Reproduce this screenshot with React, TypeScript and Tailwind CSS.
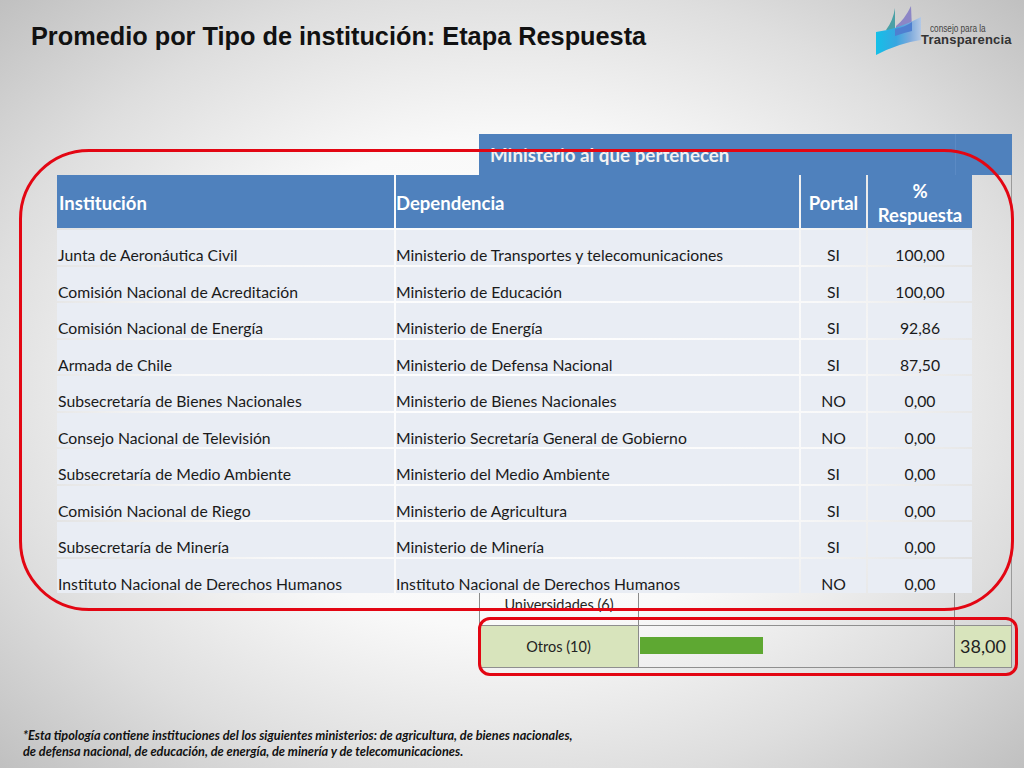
const rows: [string, string, string, string][] = [
  ["Junta de Aeronáutica Civil", "Ministerio de Transportes y telecomunicaciones", "SI", "100,00"],
  ["Comisión Nacional de Acreditación", "Ministerio de Educación", "SI", "100,00"],
  ["Comisión Nacional de Energía", "Ministerio de Energía", "SI", "92,86"],
  ["Armada de Chile", "Ministerio de Defensa Nacional", "SI", "87,50"],
  ["Subsecretaría de Bienes Nacionales", "Ministerio de Bienes Nacionales", "NO", "0,00"],
  ["Consejo Nacional de Televisión", "Ministerio Secretaría General de Gobierno", "NO", "0,00"],
  ["Subsecretaría de Medio Ambiente", "Ministerio del Medio Ambiente", "SI", "0,00"],
  ["Comisión Nacional de Riego", "Ministerio de Agricultura", "SI", "0,00"],
  ["Subsecretaría de Minería", "Ministerio de Minería", "SI", "0,00"],
  ["Instituto Nacional de Derechos Humanos", "Instituto Nacional de Derechos Humanos", "NO", "0,00"],
];

function Logo() {
  return (
    <div className="relative w-[140px] h-[54px]">
      <svg width="50" height="54" viewBox="0 0 50 54" className="absolute left-0 top-0">
        <defs>
          <linearGradient id="cy" x1="0" y1="0" x2="1" y2="0">
            <stop offset="0" stopColor="#14c0e8" />
            <stop offset="0.45" stopColor="#38a6e0" />
            <stop offset="0.75" stopColor="#7ba9dc" />
            <stop offset="1" stopColor="#b4c9e6" />
          </linearGradient>
        </defs>
        <path d="M11 29 Q18 20 20 7 L20 32 Z" fill="#4aa0a6" />
        <path d="M21 25 Q30 18 36 5 L37 28 L21 33 Z" fill="#8c86c6" />
        <path d="M1 31 Q24 28 46 16 L46 39 Q24 42 1 54 Z" fill="url(#cy)" />
        <path d="M20 28 Q30 26 37 21 L37 30 Q28 32 20 35 Z" fill="#4f7fd0" />
      </svg>
      <div className="absolute left-[55px] top-[23px] text-[10px] leading-[10px] text-[#444] font-['Liberation_Sans',sans-serif] scale-x-[0.82] origin-left whitespace-nowrap">consejo para la</div>
      <div className="absolute left-[46px] top-[31px] text-[13px] leading-[15px] font-bold text-[#333] font-['Liberation_Sans',sans-serif] whitespace-nowrap tracking-[0.2px]">Transparencia</div>
    </div>
  );
}

export default function App() {
  return (
    <div className="relative w-[1024px] h-[768px] overflow-hidden flex flex-col font-['Lato',sans-serif] text-[#111] bg-[radial-gradient(ellipse_at_50%_50%,#ffffff_0%,#f9f9f9_45%,#dedede_74%,#c0c0c0_100%)]">
      <header className="h-[134px] flex items-start justify-between pl-[31px] pr-[9px]">
        <h1 className="mt-[20px] text-[25.3px] leading-[32px] font-bold text-[#111] font-['Liberation_Sans',sans-serif] whitespace-nowrap">Promedio por Tipo de institución: Etapa Respuesta</h1>
        <div className="mt-[1px]"><Logo /></div>
      </header>

      <section className="ml-[479px] w-[533px] flex flex-col">
        <div className="h-[41px] bg-[#4f81bd] flex">
          <div className="w-[476px] pl-[11px] pt-[8px] text-[18.8px] leading-[26px] font-bold text-[#f2f2f2] whitespace-nowrap">Ministerio al que pertenecen</div>
          <div className="w-px bg-[#5b8ac4]" />
        </div>
        <div className="h-[409px] border-r border-[#9a9a9a]" />
        <div className="h-[41px] grid grid-cols-[160px_316px_1fr] border-r border-[#9a9a9a]">
          <div className="border-l border-r border-[#8a8a8a] text-center text-[14.5px] leading-[20px] text-[#222] pt-[11px] whitespace-nowrap">Universidades (6)</div>
          <div className="border-r border-[#8a8a8a]" />
          <div />
        </div>
        <div className="h-[43px] grid grid-cols-[160px_316px_1fr] border-y border-[#8f8f8f] border-r">
          <div className="bg-[#d8e4bc] border-r border-[#8a8a8a] flex items-center justify-center text-[14.5px] text-[#222]">Otros (10)</div>
          <div className="border-r border-[#8a8a8a] flex items-center pl-[1px] pb-[3px]">
            <div className="w-[123px] h-[17px] bg-[#5ea832]" />
          </div>
          <div className="bg-[#d8e4bc] flex items-center justify-center text-[18px] text-[#222]">38,00</div>
        </div>
      </section>

      <footer className="mt-[59px] pl-[23px] text-[12.7px] leading-[16px] font-bold italic text-[#111] whitespace-nowrap">
        <p>*Esta tipología contiene instituciones del los siguientes ministerios: de agricultura, de bienes nacionales,</p>
        <p>de defensa nacional, de educación, de energía, de minería y de telecomunicaciones.</p>
      </footer>

      <div className="absolute left-[57px] top-[175px] w-[915px] grid grid-cols-[337px_403px_65px_104px] gap-[2px] text-[15.75px] leading-[18px] text-[#1a1a1a]">
        <div className="h-[53px] bg-[#4f81bd] text-white font-bold text-[18.5px] flex items-center pl-[2px] pt-[3px]">Institución</div>
        <div className="h-[53px] bg-[#4f81bd] text-white font-bold text-[18.5px] flex items-center pl-0 pt-[3px]">Dependencia</div>
        <div className="h-[53px] bg-[#4f81bd] text-white font-bold text-[18.5px] flex items-center justify-center pt-[3px]">Portal</div>
        <div className="h-[53px] bg-[#4f81bd] text-white font-bold text-[18.5px] leading-[24px] flex items-center justify-center text-center pt-[3px]">%<br />Respuesta</div>
        {rows.map((r) => (
          <div key={r[0]} className="contents">
            <div className="h-[34.5px] bg-[#e9edf4] flex items-end pl-[1px] pb-[0.5px] whitespace-nowrap">{r[0]}</div>
            <div className="h-[34.5px] bg-[#e9edf4] flex items-end pl-0 pb-[0.5px] whitespace-nowrap">{r[1]}</div>
            <div className="h-[34.5px] bg-[#e9edf4] flex items-end justify-center pb-[0.5px]">{r[2]}</div>
            <div className="h-[34.5px] bg-[#e9edf4] flex items-end justify-center pb-[0.5px]">{r[3]}</div>
          </div>
        ))}
      </div>

      <div className="absolute left-[19px] top-[149px] w-[995px] h-[462px] rounded-[70px] border-[3px] border-[#e30613]" />
      <div className="absolute left-[478px] top-[617px] w-[540px] h-[59px] rounded-[12px] border-[3px] border-[#e30613]" />
    </div>
  );
}
